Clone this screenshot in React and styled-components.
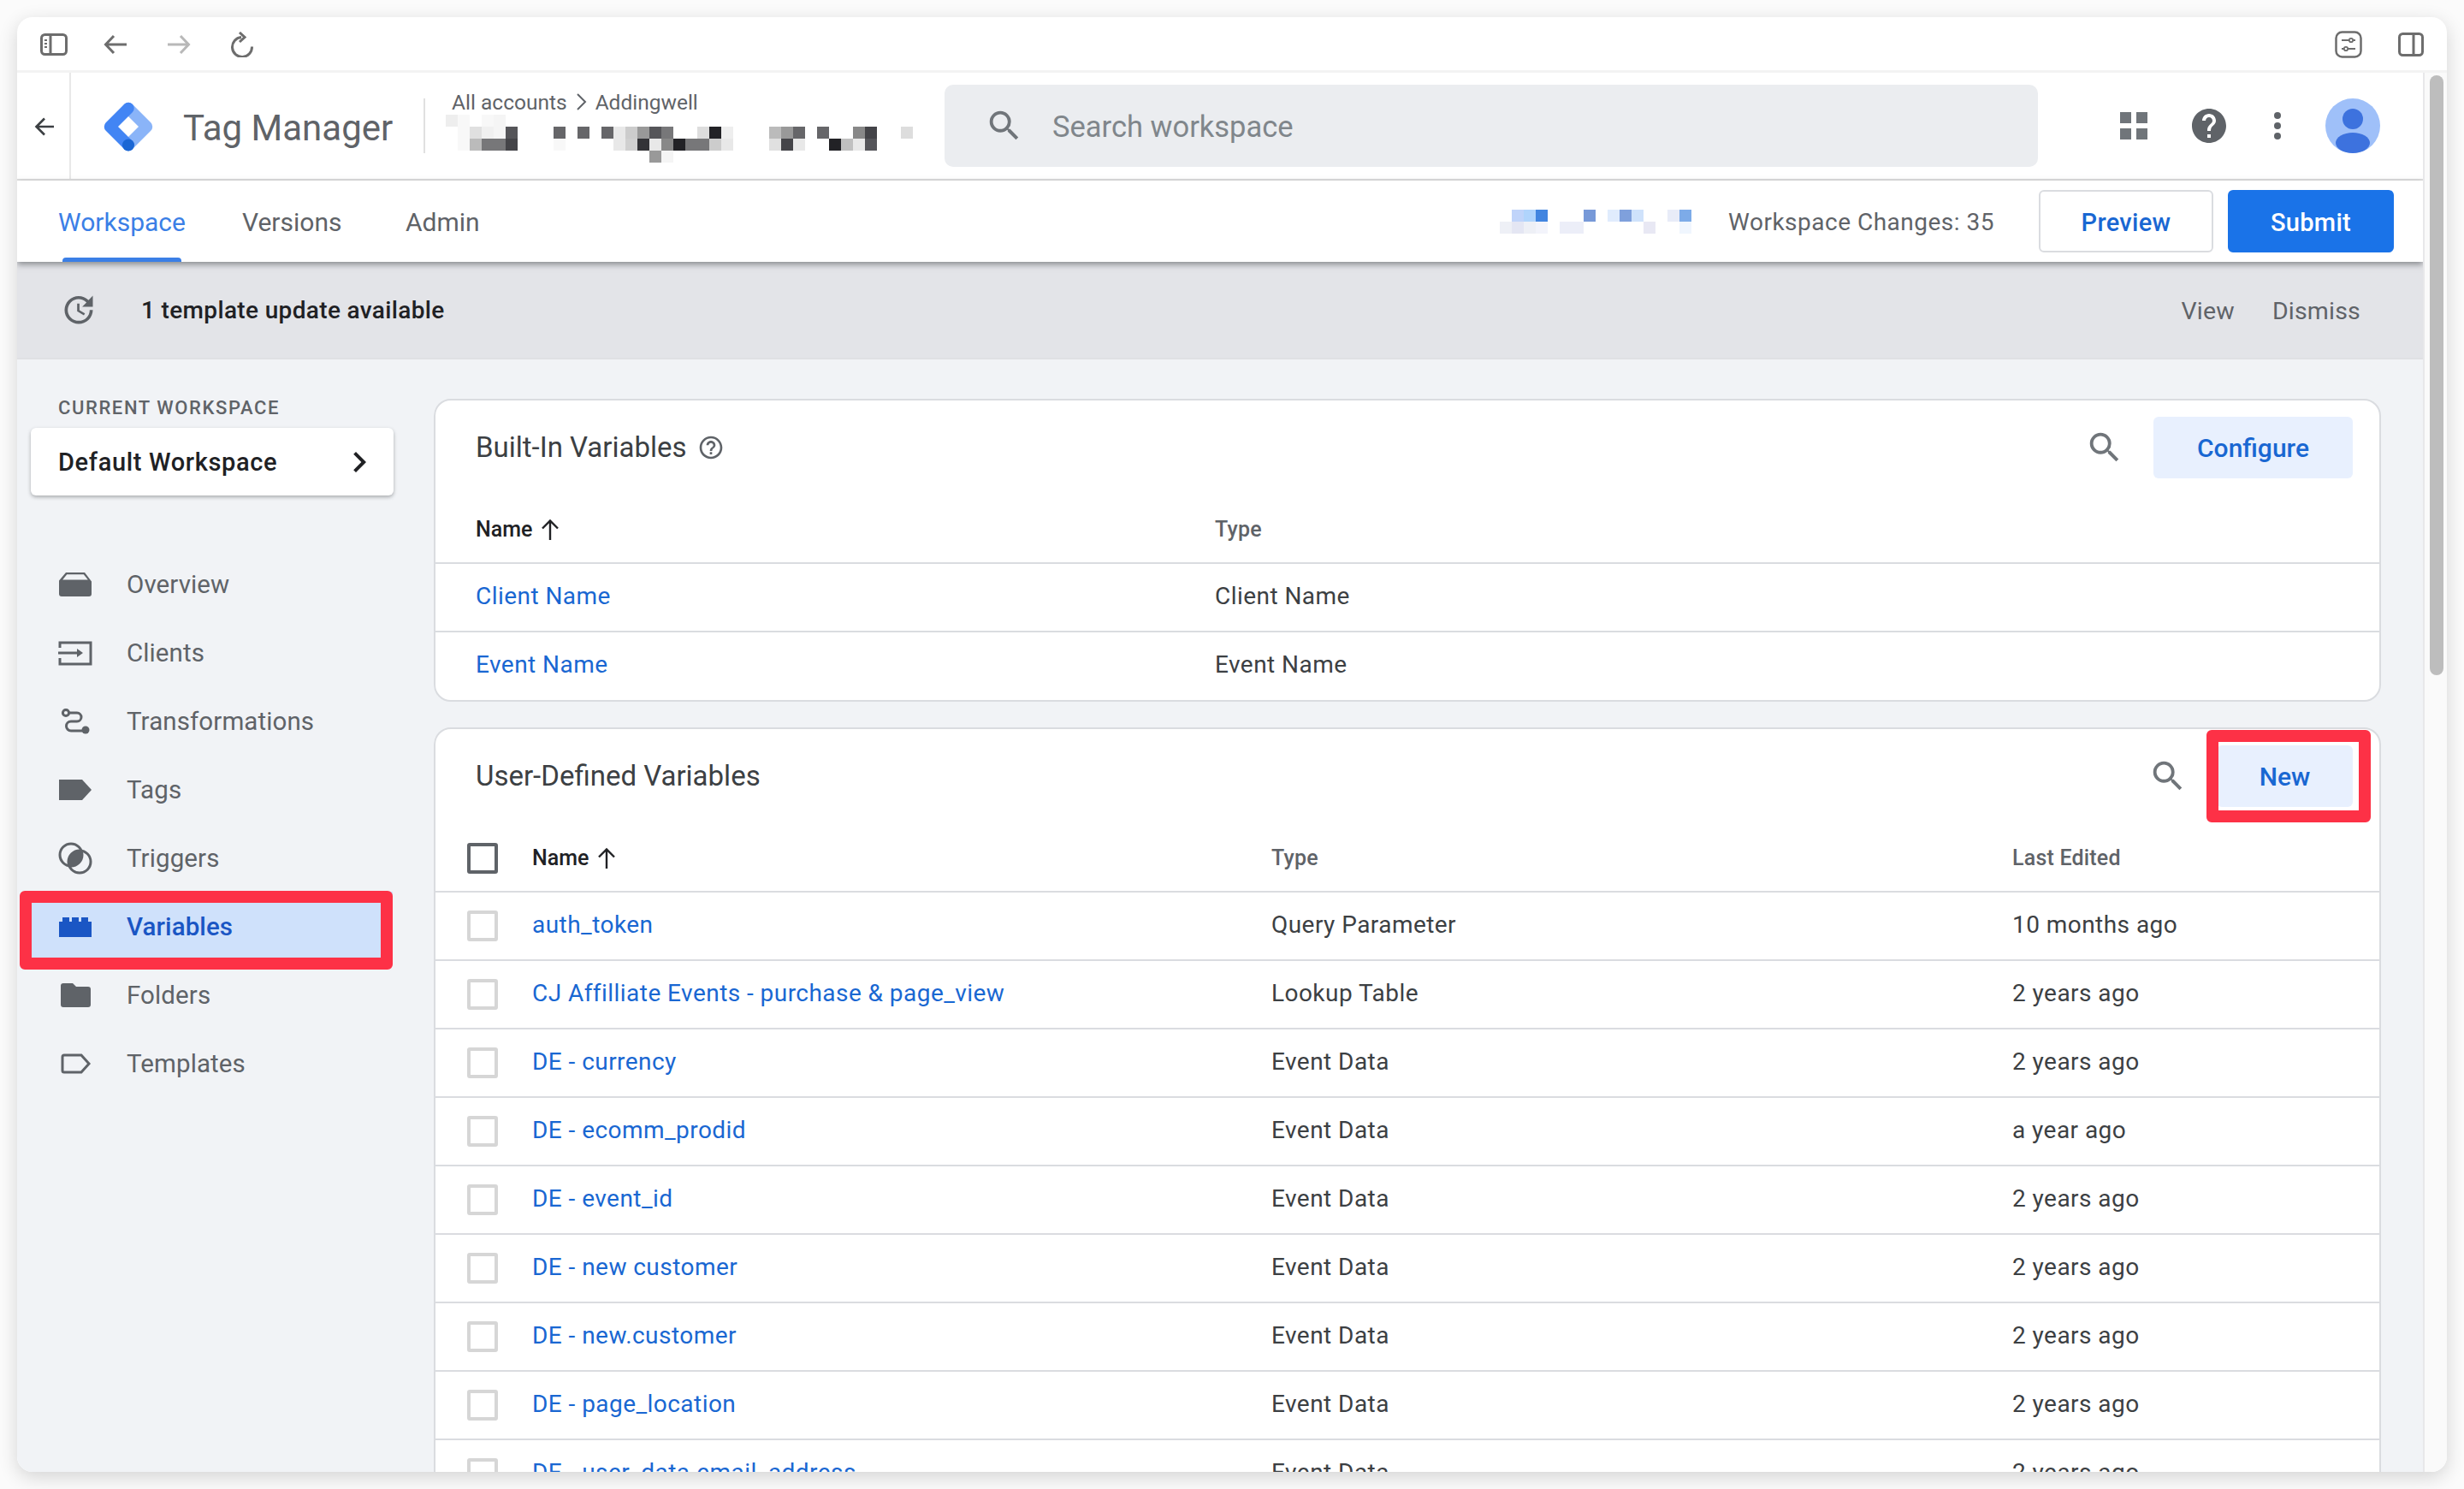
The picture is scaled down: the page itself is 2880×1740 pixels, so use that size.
import React from "react";
import styled, { createGlobalStyle } from "styled-components";

const GlobalStyle = createGlobalStyle`
  html, body {
    margin: 0;
    background: #fbfbfb;
  }
  body {
    font-family: Roboto, "Liberation Sans", sans-serif;
  }
  * {
    box-sizing: border-box;
  }
`;

const SEARCH_PATH =
  "M15.5 14h-.79l-.28-.27A6.471 6.471 0 0 0 16 9.5 6.5 6.5 0 1 0 9.5 16c1.61 0 3.09-.59 4.23-1.57l.27.28v.79l5 4.99L20.49 19l-4.99-5zm-6 0C7.01 14 5 11.99 5 9.5S7.01 5 9.5 5 14 7.01 14 9.5 11.99 14 9.5 14z";

// pixelated (redacted) account name: [row, col, colour]
const accountPixels = [
  [0, 0, "#eeeeee"], [0, 1, "#f8f8f8"], [0, 3, "#f8f8f8"], [0, 4, "#f5f5f5"],
  [1, 1, "#f8f8f8"], [1, 2, "#e0e0e0"], [1, 3, "#f0f0f0"], [1, 4, "#f5f5f5"], [1, 5, "#555559"],
  [1, 9, "#666669"], [1, 11, "#666669"], [1, 13, "#666669"], [1, 14, "#e8e8e8"], [1, 15, "#cccccc"],
  [1, 16, "#999999"], [1, 17, "#555559"], [1, 18, "#777779"], [1, 21, "#dddddd"], [1, 22, "#222226"],
  [1, 23, "#eeeeee"], [1, 27, "#bbbbbb"], [1, 28, "#999999"], [1, 29, "#666669"], [1, 31, "#666669"],
  [1, 34, "#888888"], [1, 35, "#444448"], [1, 38, "#dddddd"],
  [2, 1, "#f8f8f8"], [2, 2, "#bbbbbb"], [2, 3, "#777779"], [2, 4, "#777779"], [2, 5, "#444448"],
  [2, 9, "#f8f8f8"], [2, 14, "#e8e8e8"], [2, 15, "#d0d0d0"], [2, 16, "#333337"], [2, 17, "#e8e8e8"],
  [2, 18, "#888888"], [2, 19, "#222226"], [2, 20, "#777779"], [2, 21, "#777779"], [2, 22, "#cccccc"],
  [2, 23, "#e8e8e8"], [2, 27, "#e0e0e0"], [2, 28, "#444448"], [2, 29, "#e8e8e8"], [2, 32, "#222226"],
  [2, 33, "#c0c0c0"], [2, 34, "#e8e8e8"], [2, 35, "#555559"],
  [3, 17, "#999999"], [3, 18, "#f5f5f5"],
];

const changePixels = [
  [0, 1, "#c0d4fa"], [0, 2, "#b0d4fc"], [0, 3, "#4285e0"], [0, 7, "#7799d8"], [0, 9, "#e0ecfd"],
  [0, 10, "#7fa0dc"], [0, 11, "#cfe2fb"], [0, 14, "#e8ecf8"], [0, 15, "#7dabe8"],
  [1, 0, "#eef0f6"], [1, 1, "#e4e6f3"], [1, 2, "#eef0f6"], [1, 3, "#f3f4fb"], [1, 5, "#eceef8"],
  [1, 6, "#eceef8"], [1, 12, "#e8e8f4"], [1, 15, "#f0f6fe"],
];

const navItems = [
  { name: "Overview", icon: "overview" },
  { name: "Clients", icon: "clients" },
  { name: "Transformations", icon: "transformations" },
  { name: "Tags", icon: "tags" },
  { name: "Triggers", icon: "triggers" },
  { name: "Variables", icon: "variables", active: true },
  { name: "Folders", icon: "folders" },
  { name: "Templates", icon: "templates" },
];

const builtInRows = ["Client Name", "Event Name"];

const userRows = [
  { name: "auth_token", type: "Query Parameter", edited: "10 months ago" },
  { name: "CJ Affilliate Events - purchase & page_view", type: "Lookup Table", edited: "2 years ago" },
  { name: "DE - currency", type: "Event Data", edited: "2 years ago" },
  { name: "DE - ecomm_prodid", type: "Event Data", edited: "a year ago" },
  { name: "DE - event_id", type: "Event Data", edited: "2 years ago" },
  { name: "DE - new customer", type: "Event Data", edited: "2 years ago" },
  { name: "DE - new.customer", type: "Event Data", edited: "2 years ago" },
  { name: "DE - page_location", type: "Event Data", edited: "2 years ago" },
  { name: "DE - user_data.email_address", type: "Event Data", edited: "2 years ago" },
];

function Mosaic({ pixels, cols, rows, className }) {
  return (
    <svg className={className} width={cols * 14} height={rows * 14} viewBox={`0 0 ${cols * 14} ${rows * 14}`} shapeRendering="crispEdges">
      {pixels.map(([r, c, fill]) => (
        <rect key={`${r}-${c}`} x={c * 14} y={r * 14} width="14" height="14" fill={fill} />
      ))}
    </svg>
  );
}

function SearchIcon() {
  return (
    <svg width="46" height="46" viewBox="0 0 24 24" fill="#70757a">
      <path d={SEARCH_PATH} />
    </svg>
  );
}

function SortArrow() {
  return (
    <svg width="24" height="26" viewBox="0 0 24 26" fill="none" stroke="#202124" strokeWidth="2.4">
      <path d="M12 25V3M3 11.5 12 2.5l9 9" />
    </svg>
  );
}

function NavIcon({ kind, color }) {
  switch (kind) {
    case "overview":
      return (
        <svg width="40" height="30" viewBox="0 0 40 30" fill={color}>
          <path d="M9 1h22l8 10.5v-1V26a3 3 0 0 1-3 3H4a3 3 0 0 1-3-3V10.500z" />
          <path d="M10.200 3.200h19.600l5 6.300H5.200z" fill="#f1f3f6" />
        </svg>
      );
    case "clients":
      return (
        <svg width="40" height="30" viewBox="0 0 40 30" fill="none" stroke={color} strokeWidth="3">
          <path d="M2 9V3h36v25H2v-7" />
          <path d="M0 15h24" />
          <path d="M22 10l7 5-7 5z" fill={color} stroke="none" />
        </svg>
      );
    case "transformations":
      return (
        <svg width="40" height="30" viewBox="0 0 40 30" fill="none" stroke={color} strokeWidth="3">
          <circle cx="9" cy="5" r="3.600" />
          <path d="M13 5h9a5 5 0 0 1 0 10h-7a5.500 5.500 0 0 0 0 11h14" />
          <circle cx="32" cy="25" r="4.500" fill={color} stroke="none" />
        </svg>
      );
    case "tags":
      return (
        <svg width="40" height="24" viewBox="0 0 40 24" fill={color}>
          <path d="M1 0h27l11 12-11 12H1z" />
        </svg>
      );
    case "triggers":
      return (
        <svg width="40" height="38" viewBox="0 0 40 38" fill="none" stroke={color} strokeWidth="3">
          <circle cx="15" cy="15" r="13" />
          <circle cx="25" cy="23" r="13" />
          <path d="M12 20a13 13 0 0 1 15-10 13 13 0 0 1 1 8 13 13 0 0 1-15 10 13 13 0 0 1-1-8z" fill={color} stroke="none" />
        </svg>
      );
    case "variables":
      return (
        <svg width="40" height="24" viewBox="0 0 40 24" fill={color}>
          <path d="M1 6h4V1h8v5h3V1h8v5h3V1h8v5h4v18H1z" />
        </svg>
      );
    case "folders":
      return (
        <svg width="40" height="28" viewBox="0 0 40 28" fill={color}>
          <path d="M6 0h11l4 4h14a3 3 0 0 1 3 3v18a3 3 0 0 1-3 3H6a3 3 0 0 1-3-3V3a3 3 0 0 1 3-3z" />
        </svg>
      );
    default:
      return (
        <svg width="40" height="24" viewBox="0 0 40 24" fill="none" stroke={color} strokeWidth="3">
          <path d="M7 2h20l9 10-9 10H7a2 2 0 0 1-2-2V4a2 2 0 0 1 2-2z" />
        </svg>
      );
  }
}

export default function App() {
  return (
    <Screen>
      <GlobalStyle />
      <BrowserWindow>
        <Toolbar>
          <ToolIcon $flush>
            <svg width="32" height="26" viewBox="0 0 32 26" fill="none" stroke="#6d6d6d" strokeWidth="3">
              <rect x="1.500" y="1.500" width="29" height="23" rx="4" />
              <path d="M12 2v22" />
              <path d="M5 8h3M5 12h3M5 16h3" strokeWidth="2" />
            </svg>
          </ToolIcon>
          <ToolIcon>
            <svg width="28" height="24" viewBox="0 0 28 24" fill="none" stroke="#6d6d6d" strokeWidth="3">
              <path d="M27 12H3M12 2 2.500 12 12 22" />
            </svg>
          </ToolIcon>
          <ToolIcon>
            <svg width="28" height="24" viewBox="0 0 28 24" fill="none" stroke="#b8b8b8" strokeWidth="3">
              <path d="M1 12h24M16 2l9.500 10L16 22" />
            </svg>
          </ToolIcon>
          <ToolIcon>
            <svg width="28" height="30" viewBox="0 0 28 30" fill="none" stroke="#6d6d6d" strokeWidth="3">
              <path d="M13 6.500a11.500 11.500 0 1 0 12.500 11" />
              <path d="M11 1l6 5.500-6 5.500" />
            </svg>
          </ToolIcon>
          <ToolbarRight>
            <svg width="32" height="32" viewBox="0 0 32 32" fill="none" stroke="#6d6d6d" strokeWidth="2.500">
              <rect x="1.500" y="1.500" width="29" height="29" rx="7" />
              <path d="M8 11h9M21 11h3M8 21h3M15 21h9" strokeWidth="2" />
              <circle cx="19" cy="11" r="2.200" strokeWidth="1.800" />
              <circle cx="13" cy="21" r="2.200" strokeWidth="1.800" />
            </svg>
            <svg width="30" height="30" viewBox="0 0 30 30" fill="none" stroke="#6d6d6d" strokeWidth="3">
              <rect x="1.500" y="2.500" width="27" height="25" rx="4" />
              <path d="M18 3v24" />
            </svg>
          </ToolbarRight>
        </Toolbar>
        <Body>
          <Page>
            <AppBar>
              <BackCell>
                <svg width="24" height="22" viewBox="0 0 24 22" fill="none" stroke="#3c4043" strokeWidth="2.600">
                  <path d="M23 11H3M12 1.500 2.500 11l9.500 9.500" />
                </svg>
              </BackCell>
              <Logo width="60" height="60" viewBox="-1 -1 60 60" fill="none" strokeWidth="13.500" strokeLinecap="round" strokeLinejoin="round">
                <path d="M29 7.500 50.500 29 29 50.500" stroke="#8ab4f8" />
                <path d="M29 7.500 7.500 29 29 50.500" stroke="#4285f4" />
                <circle cx="29" cy="50.500" r="7" fill="#1a66d4" />
              </Logo>
              <ProductName>Tag Manager</ProductName>
              <BarDivider />
              <Account>
                <Breadcrumb>
                  All accounts
                  <svg width="13" height="20" viewBox="0 0 13 20" fill="none" stroke="#5f6368" strokeWidth="2">
                    <path d="M2 1l9 9-9 9" />
                  </svg>
                  Addingwell
                </Breadcrumb>
                <AccountMosaic pixels={accountPixels} cols={39} rows={4} />
              </Account>
              <SearchBox>
                <SearchIcon />
                <SearchHint>Search workspace</SearchHint>
              </SearchBox>
              <BarIcons>
                <svg width="32" height="32" viewBox="0 0 32 32" fill="#70757a">
                  <rect width="13" height="13" />
                  <rect x="19" width="13" height="13" />
                  <rect y="19" width="13" height="13" />
                  <rect x="19" y="19" width="13" height="13" />
                </svg>
                <HelpIcon width="48" height="48" viewBox="0 0 24 24" fill="#5f6368">
                  <path d="M12 2C6.480 2 2 6.480 2 12s4.480 10 10 10 10-4.480 10-10S17.520 2 12 2zm1 17h-2v-2h2v2zm2.070-7.750l-.9.920C13.450 12.900 13 13.500 13 15h-2v-.5c0-1.100.45-2.100 1.170-2.830l1.240-1.260c.37-.36.59-.86.59-1.410 0-1.100-.9-2-2-2s-2 .9-2 2H8c0-2.210 1.790-4 4-4s4 1.790 4 4c0 .88-.36 1.680-.93 2.250z" />
                </HelpIcon>
                <svg width="16" height="32" viewBox="0 0 16 32" fill="#5f6368">
                  <circle cx="8" cy="4" r="4" />
                  <circle cx="8" cy="16" r="4" />
                  <circle cx="8" cy="28" r="4" />
                </svg>
                <Avatar width="64" height="64" viewBox="0 0 64 64">
                  <circle cx="32" cy="32" r="32" fill="#9fc0f9" />
                  <circle cx="32" cy="24" r="12" fill="#3d72de" />
                  <ellipse cx="32" cy="52" rx="20" ry="12" fill="#3d72de" />
                </Avatar>
              </BarIcons>
            </AppBar>
            <TabBar>
              <Tab $width={215} $active>Workspace</Tab>
              <Tab $width={191}>Versions</Tab>
              <Tab>Admin</Tab>
              <TabActions>
                <ChangeMosaic pixels={changePixels} cols={16} rows={2} />
                <Changes>Workspace Changes: 35</Changes>
                <PreviewButton>Preview</PreviewButton>
                <SubmitButton>Submit</SubmitButton>
              </TabActions>
            </TabBar>
            <Banner>
              <svg width="44" height="44" viewBox="0 0 24 24" fill="#5f6368">
                <path d="M21 10.120h-6.780l2.740-2.820c-2.730-2.700-7.150-2.800-9.880-.1-2.730 2.710-2.730 7.080 0 9.790s7.150 2.710 9.880 0C18.320 15.650 19 14.080 19 12.100h2c0 1.980-.88 4.550-2.640 6.290-3.510 3.480-9.210 3.480-12.720 0-3.500-3.470-3.530-9.110-.02-12.580s9.140-3.470 12.650 0L21 3v7.120zM12.500 8v4.250l3.500 2.080-.72 1.210L11 13V8h1.500z" />
              </svg>
              <BannerText>1 template update available</BannerText>
              <BannerAction>View</BannerAction>
              <BannerAction>Dismiss</BannerAction>
            </Banner>
            <Content>
              <Sidebar>
                <SideLabel>CURRENT WORKSPACE</SideLabel>
                <WorkspaceCard>
                  Default Workspace
                  <svg width="48" height="48" viewBox="0 0 24 24" fill="#202124">
                    <path d="M8.590 16.590 13.170 12 8.590 7.410 10 6l6 6-6 6z" />
                  </svg>
                </WorkspaceCard>
                <Nav>
                  {navItems.map((item) => (
                    <NavRow key={item.name} $active={item.active}>
                      <NavGlyph>
                        <NavIcon kind={item.icon} color={item.active ? "#1a56c4" : "#5f6368"} />
                      </NavGlyph>
                      {item.name}
                      {item.active && <NavFrame />}
                    </NavRow>
                  ))}
                </Nav>
              </Sidebar>
              <Cards>
                <Card>
                  <CardBar>
                    <CardTitle>Built-In Variables</CardTitle>
                    <svg width="32" height="32" viewBox="0 0 24 24" fill="#5f6368">
                      <path d="M11 18h2v-2h-2v2zm1-16C6.480 2 2 6.480 2 12s4.480 10 10 10 10-4.480 10-10S17.520 2 12 2zm0 18c-4.410 0-8-3.590-8-8s3.590-8 8-8 8 3.590 8 8-3.590 8-8 8zm0-14c-2.210 0-4 1.790-4 4h2c0-1.100.9-2 2-2s2 .9 2 2c0 2-3 1.750-3 5h2c0-2.250 3-2.500 3-5 0-2.210-1.790-4-4-4z" />
                    </svg>
                    <CardTools>
                      <SearchIcon />
                      <SoftButton $width={233}>Configure</SoftButton>
                    </CardTools>
                  </CardBar>
                  <BuiltInHead>
                    <SortName>Name <SortArrow /></SortName>
                    <ColumnLabel>Type</ColumnLabel>
                  </BuiltInHead>
                  {builtInRows.map((name) => (
                    <BuiltInRow key={name}>
                      <LinkName>{name}</LinkName>
                      <Cell>{name}</Cell>
                    </BuiltInRow>
                  ))}
                </Card>
                <Card>
                  <CardBar>
                    <CardTitle>User-Defined Variables</CardTitle>
                    <CardTools>
                      <SearchIcon />
                      <SoftButton $width={159}>
                        New
                        <ButtonFrame />
                      </SoftButton>
                    </CardTools>
                  </CardBar>
                  <UserHead>
                    <Checkbox $strong />
                    <SortName>Name <SortArrow /></SortName>
                    <ColumnLabel>Type</ColumnLabel>
                    <ColumnLabel>Last Edited</ColumnLabel>
                  </UserHead>
                  {userRows.map((row) => (
                    <UserRow key={row.name}>
                      <Checkbox />
                      <LinkName>{row.name}</LinkName>
                      <Cell>{row.type}</Cell>
                      <Cell>{row.edited}</Cell>
                    </UserRow>
                  ))}
                </Card>
              </Cards>
            </Content>
          </Page>
          <ScrollTrack>
            <ScrollThumb />
          </ScrollTrack>
        </Body>
      </BrowserWindow>
    </Screen>
  );
}

const Screen = styled.div`
  width: 2880px;
  height: 1740px;
  padding: 20px;
  overflow: hidden;
`;

const BrowserWindow = styled.div`
  width: 2840px;
  height: 1700px;
  display: flex;
  flex-direction: column;
  overflow: hidden;
  background: #fff;
  border-radius: 18px;
  box-shadow: 0 6px 22px rgba(0, 0, 0, 0.16);
`;

const Toolbar = styled.div`
  height: 65px;
  flex: none;
  display: flex;
  align-items: center;
  padding: 2px 0 0 27px;
  border-bottom: 3px solid #f3f3f3;
`;

const ToolIcon = styled.div`
  width: ${(p) => (p.$flush ? "51px" : "74px")};
  display: flex;
  justify-content: ${(p) => (p.$flush ? "flex-start" : "center")};
`;

const ToolbarRight = styled.div`
  margin-left: auto;
  margin-right: 27px;
  display: flex;
  align-items: center;
  gap: 42px;
`;

const Body = styled.div`
  flex: 1;
  min-height: 0;
  display: flex;
`;

const Page = styled.div`
  flex: 1;
  min-width: 0;
  display: flex;
  flex-direction: column;
  overflow: hidden;
`;

const ScrollTrack = styled.div`
  width: 28px;
  flex: none;
  padding: 3px 6px 0 6px;
  background: #fafafa;
  border-left: 2px solid #e8e8ea;
`;

const ScrollThumb = styled.div`
  width: 16px;
  height: 701px;
  border-radius: 8px;
  background: #bdbdbd;
`;

const AppBar = styled.div`
  height: 126px;
  flex: none;
  display: flex;
  align-items: center;
  border-bottom: 2px solid #e0e0e0;
  background: #fff;
`;

const BackCell = styled.div`
  width: 63px;
  align-self: stretch;
  display: flex;
  align-items: center;
  justify-content: center;
  padding: 2px 0 0 2px;
  border-right: 2px solid #e8e8e8;
`;

const Logo = styled.svg`
  margin: 2px 0 0 37px;
  flex: none;
`;

const ProductName = styled.div`
  margin-left: 34px;
  padding-top: 4px;
  width: 247px;
  font-size: 42px;
  color: #5f6368;
  white-space: nowrap;
`;

const BarDivider = styled.div`
  margin-left: 34px;
  width: 2px;
  height: 64px;
  background: #e0e0e0;
`;

const Account = styled.div`
  margin-left: 31px;
  width: 576px;
  height: 82px;
  flex: none;
  display: flex;
  flex-direction: column;
  margin-top: 4px;
`;

const Breadcrumb = styled.div`
  display: flex;
  align-items: center;
  gap: 10px;
  height: 26px;
  margin: -2px 0 2px;
  font-size: 24.500px;
  color: #5f6368;
  white-space: nowrap;
`;

const AccountMosaic = styled(Mosaic)`
  display: block;
  margin: 0 0 0 -7px;
`;

const SearchBox = styled.div`
  width: 1278px;
  height: 96px;
  flex: none;
  display: flex;
  align-items: center;
  gap: 33px;
  padding-left: 47px;
  background: #ebedf0;
  border-radius: 10px;
`;

const SearchHint = styled.div`
  padding-top: 2px;
  font-size: 34.500px;
  color: #80868b;
`;

const BarIcons = styled.div`
  margin-left: 96px;
  display: flex;
  align-items: center;
  gap: 52px;
`;

const HelpIcon = styled.svg`
  margin: 0 -4px;
`;

const Avatar = styled.svg`
  margin-left: -4px;
`;

const TabBar = styled.div`
  height: 95px;
  flex: none;
  position: relative;
  z-index: 2;
  display: flex;
  align-items: center;
  padding: 0 34px 0 48px;
  background: #fff;
  box-shadow: 0 3px 7px rgba(60, 64, 67, 0.55);
`;

const Tab = styled.div`
  position: relative;
  align-self: stretch;
  ${(p) => p.$width && `width: ${p.$width}px;`}
  display: flex;
  align-items: center;
  padding-top: 1px;
  font-size: 30px;
  color: ${(p) => (p.$active ? "#3b7fe6" : "#5f6368")};
  &::after {
    content: "";
    display: ${(p) => (p.$active ? "block" : "none")};
    position: absolute;
    left: 5px;
    bottom: 0;
    width: 139px;
    height: 5px;
    border-radius: 4px 4px 0 0;
    background: #3b7fe6;
  }
`;

const TabActions = styled.div`
  margin-left: auto;
  display: flex;
  align-items: center;
`;

const ChangeMosaic = styled(Mosaic)`
  margin-right: 43px;
`;

const Changes = styled.div`
  width: 363px;
  padding-top: 2px;
  font-size: 28px;
  letter-spacing: 0.5px;
  color: #5f6368;
  white-space: nowrap;
`;

const PreviewButton = styled.div`
  width: 204px;
  height: 73px;
  display: flex;
  align-items: center;
  justify-content: center;
  padding-top: 2px;
  font-size: 29px;
  font-weight: 500;
  letter-spacing: 0.3px;
  color: #1967d2;
  background: #fff;
  border: 2px solid #dadce0;
  border-radius: 6px;
`;

const SubmitButton = styled(PreviewButton)`
  margin-left: 17px;
  width: 194px;
  color: #fff;
  background: #1a73e8;
  border: none;
`;

const Banner = styled.div`
  height: 114px;
  flex: none;
  display: flex;
  align-items: center;
  padding: 0 73px 0 50px;
  background: #e3e4e8;
  border-bottom: 2px solid #dfe0e3;
`;

const BannerText = styled.div`
  margin-left: 51px;
  margin-right: auto;
  font-size: 28px;
  font-weight: 500;
  letter-spacing: 0.35px;
  color: #202124;
`;

const BannerAction = styled.div`
  margin-left: 44px;
  padding-top: 2px;
  font-size: 28.500px;
  letter-spacing: 0.2px;
  color: #5f6368;
`;

const Content = styled.div`
  flex: 1;
  min-height: 0;
  display: flex;
  background: #f1f3f6;
`;

const Sidebar = styled.div`
  width: 487px;
  flex: none;
  padding: 44px 47px 0 16px;
`;

const SideLabel = styled.div`
  height: 26px;
  margin-bottom: 10px;
  padding-left: 32px;
  font-size: 22px;
  font-weight: 500;
  letter-spacing: 1.6px;
  line-height: 26px;
  color: #5f6368;
  white-space: nowrap;
`;

const WorkspaceCard = styled.div`
  height: 79px;
  margin-bottom: 63px;
  display: flex;
  align-items: center;
  justify-content: space-between;
  padding: 0 16px 0 32px;
  font-size: 29px;
  font-weight: 500;
  letter-spacing: 0.65px;
  color: #202124;
  background: #fff;
  border-radius: 6px;
  box-shadow: 0 2px 4px rgba(60, 64, 67, 0.4);
`;

const Nav = styled.div`
  display: flex;
  flex-direction: column;
`;

const NavRow = styled.div`
  position: relative;
  height: 80px;
  margin-right: 1px;
  flex: none;
  display: flex;
  align-items: center;
  padding: 2px 0 0 32px;
  font-size: 29.500px;
  letter-spacing: 0.1px;
  font-weight: ${(p) => (p.$active ? 500 : 400)};
  color: ${(p) => (p.$active ? "#1a56c4" : "#5f6368")};
  background: ${(p) => (p.$active ? "#cfe1fb" : "transparent")};
`;

const NavGlyph = styled.div`
  width: 80px;
  flex: none;
  display: flex;
`;

const NavFrame = styled.div`
  position: absolute;
  z-index: 1;
  top: -1px;
  bottom: -11px;
  left: -13px;
  right: 0;
  border: 14px solid #fd3146;
  border-radius: 6px;
`;

const Cards = styled.div`
  width: 2276px;
  flex: none;
  padding-top: 46px;
  display: flex;
  flex-direction: column;
  gap: 30px;
`;

const Card = styled.div`
  flex: none;
  background: #fff;
  border: 2px solid #dadce0;
  border-radius: 20px;
`;

const CardBar = styled.div`
  height: 110px;
  display: flex;
  align-items: center;
  gap: 12px;
  padding: 0 31px 0 47px;
`;

const CardTitle = styled.div`
  margin-bottom: 2px;
  font-size: 33px;
  color: #3c4043;
`;

const CardTools = styled.div`
  margin-left: auto;
  display: flex;
  align-items: center;
  gap: 34px;
`;

const SoftButton = styled.div`
  position: relative;
  width: ${(p) => p.$width}px;
  height: 72px;
  display: flex;
  align-items: center;
  justify-content: center;
  font-size: 30px;
  font-weight: 500;
  color: #1967d2;
  background: #e8f0fe;
  border-radius: 6px;
`;

const ButtonFrame = styled.div`
  position: absolute;
  top: -18px;
  bottom: -18px;
  left: -12px;
  right: -21px;
  border: 14px solid #fd3146;
  border-radius: 6px;
`;

const BuiltInHead = styled.div`
  height: 81px;
  display: grid;
  grid-template-columns: 864px 1fr;
  align-items: center;
  padding: 2px 0 0 47px;
  border-bottom: 2px solid #dadce0;
`;

const BuiltInRow = styled.div`
  height: 80px;
  display: grid;
  grid-template-columns: 864px 1fr;
  align-items: center;
  padding-left: 47px;
  border-bottom: 2px solid #dadce0;
  &:last-child {
    height: 79px;
    border-bottom: none;
  }
`;

const UserHead = styled.div`
  height: 81px;
  display: grid;
  grid-template-columns: 76px 864px 866px 1fr;
  align-items: center;
  padding: 2px 0 0 37px;
  border-bottom: 2px solid #dadce0;
`;

const UserRow = styled(UserHead)`
  height: 80px;
  padding-top: 0;
`;

const SortName = styled.div`
  display: flex;
  align-items: center;
  gap: 9px;
  font-size: 25px;
  font-weight: 500;
  color: #202124;
`;

const ColumnLabel = styled.div`
  font-size: 25px;
  font-weight: 500;
  letter-spacing: 0.2px;
  color: #5f6368;
`;

const LinkName = styled.div`
  margin-bottom: 4px;
  font-size: 28px;
  letter-spacing: 0.45px;
  color: #1967d2;
  white-space: nowrap;
`;

const Cell = styled(LinkName)`
  color: #3c4043;
`;

const Checkbox = styled.div`
  width: 36px;
  height: 36px;
  border: ${(p) => (p.$strong ? "4px solid #5f6368" : "4px solid #d6d6d6")};
  border-radius: 3px;
`;
